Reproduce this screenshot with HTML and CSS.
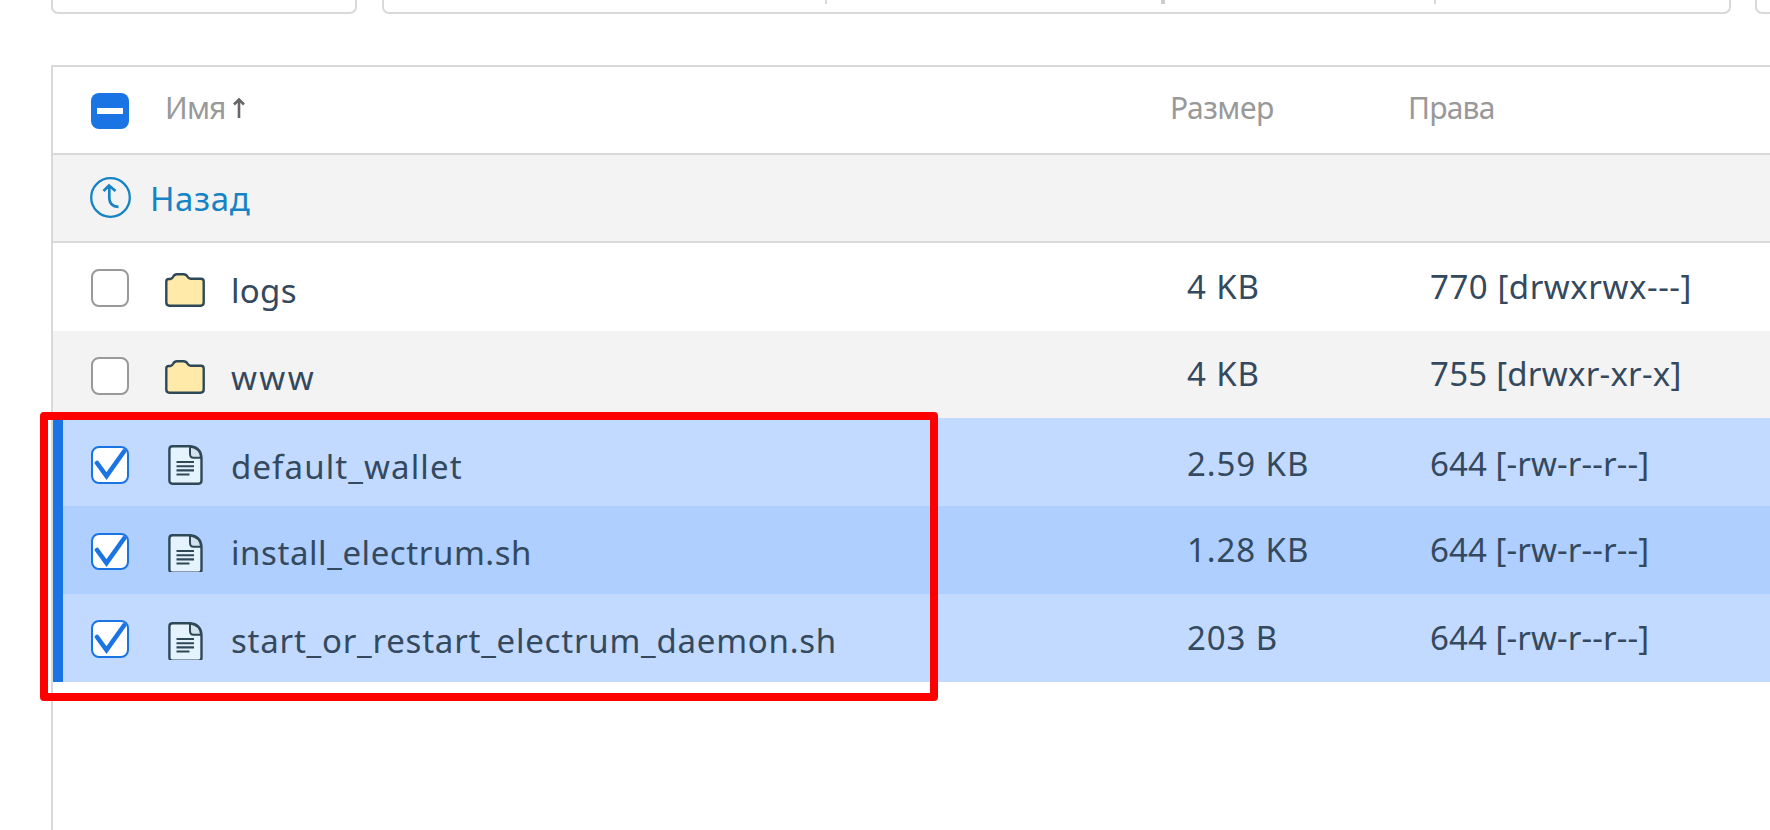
FILE: index.html
```html
<!DOCTYPE html>
<html lang="ru">
<head>
<meta charset="utf-8">
<title>Файлы</title>
<link rel="stylesheet" href="styles.css">
</head>
<body>
<svg class="defs" width="0" height="0">
  <symbol id="folder" viewBox="0 0 40 34"><path d="M1.3 8.5Q1.3 6 4 6H5.5Q7.3 5.7 8.3 3.6Q9.3 1.3 12 1.3H18.5Q21.3 1.3 22.4 3.6Q23.4 5.7 25.5 5.7H36Q38.7 5.7 38.7 8.5V29.5Q38.7 32.7 35.5 32.7H4.5Q1.3 32.7 1.3 29.5Z" fill="#ffeaa9" stroke="#2f4858" stroke-width="2.4"/></symbol>
  <symbol id="doc" viewBox="0 0 35 40"><path d="M4.5 1.3H22Q33.5 2.5 33.5 14V35.5Q33.5 38.7 30.5 38.7H4.5Q1.4 38.7 1.4 35.5V4.5Q1.4 1.3 4.5 1.3Z" fill="#e4f3fd" stroke="#2f4858" stroke-width="2.4"/><path d="M22 1.5V9Q22 12.7 25.5 12.7H33Q32.5 3 22 1.5Z" fill="#d3e3ee" stroke="#2f4858" stroke-width="2"/><path d="M8.5 17H26M8.5 21.3H26M8.5 25.4H26M8.5 29.5H21.5" stroke="#2f4858" stroke-width="2.1"/></symbol>
  <symbol id="tick" viewBox="0 0 34 34"><path d="M4 15L13.5 28L31 3.5" fill="none" stroke="#1b74e4" stroke-width="4.6" stroke-linecap="round"/></symbol>
</svg>
<div class="toolbar">
  <div class="group group-a"></div>
  <div class="group group-b"><i class="sep"></i><i class="sep thick"></i><i class="sep last"></i></div>
  <div class="group group-c"></div>
</div>
<div class="table">
  <div class="row head">
    <span class="check mixed"></span>
    <span class="title"><span class="t-name">Имя</span><svg class="arrow" viewBox="0 0 12 20"><path d="M6 20V2M1 6.5L6 1.5L11 6.5" fill="none" stroke="#666" stroke-width="2.6"/></svg></span>
    <span class="size">Размер</span>
    <span class="rights">Права</span>
  </div>
  <div class="row back">
    <svg class="up" viewBox="0 0 41 41"><circle cx="20.5" cy="20.5" r="19.3" fill="none" stroke="#1583c4" stroke-width="2.3"/><path d="M13.5 14L19 8.5L25.5 14M19.3 9V21Q19.3 29.5 28.5 29.8" fill="none" stroke="#1583c4" stroke-width="2.7"/></svg>
    <span class="link">Назад</span>
  </div>
  <div class="row logs"><span class="check"></span><svg class="folder"><use href="#folder"/></svg><span class="name">logs</span><span class="size">4 KB</span><span class="rights">770 [drwxrwx---]</span></div>
  <div class="row www"><span class="check"></span><svg class="folder"><use href="#folder"/></svg><span class="name">www</span><span class="size">4 KB</span><span class="rights">755 [drwxr-xr-x]</span></div>
  <div class="row picked wallet"><span class="check on"><svg><use href="#tick"/></svg></span><svg class="doc"><use href="#doc"/></svg><span class="name">default_wallet</span><span class="size">2.59 KB</span><span class="rights">644 [-rw-r--r--]</span></div>
  <div class="row picked install"><span class="check on"><svg><use href="#tick"/></svg></span><svg class="doc cut"><use href="#doc" width="35" height="40"/></svg><span class="name">install_electrum.sh</span><span class="size">1.28 KB</span><span class="rights">644 [-rw-r--r--]</span></div>
  <div class="row picked start"><span class="check on"><svg><use href="#tick"/></svg></span><svg class="doc cut"><use href="#doc" width="35" height="40"/></svg><span class="name">start_or_restart_electrum_daemon.sh</span><span class="size">203 B</span><span class="rights">644 [-rw-r--r--]</span></div>
</div>
<div class="marker"></div>
</body>
</html>
```
FILE: styles.css
```css
* { box-sizing: border-box; }
body { margin: 0; width: 1770px; height: 830px; overflow: hidden; position: relative; background: #fff; color: #34495e; font-family: "Noto Sans", sans-serif; font-size: 33px; }
.defs { position: absolute; }
.toolbar { display: grid; grid-template-columns: 306px 1349px 60px; gap: 24.5px; height: 14px; margin-left: 51px; width: 1800px; }
.group { border: 2px solid #d9d9d9; border-top: 0; border-radius: 0 0 7px 7px; }
.group-b { display: flex; padding-left: 441px; }
.sep { flex: none; width: 2px; height: 4px; background: #d9d9d9; margin-right: 334px; }
.sep.thick { width: 4px; background: #ccc; margin-right: 269px; }
.sep.last { margin-right: 0; }
.table { margin: 51px 0 0 51px; width: 1730px; height: 780px; border: 2px solid #d9d9d9; }
.row { display: grid; grid-template-columns: 38px 36px 40px 26px 956px 243px 1fr; align-items: center; height: 88px; padding-left: 38px; line-height: 46px; white-space: nowrap; }
.head { border-bottom: 2px solid #d9d9d9; font-size: 30px; color: #999; }
.head .title { grid-column: 3 / 6; display: flex; align-items: center; padding-bottom: 4px; }
.t-name { letter-spacing: -0.8px; }
.arrow { width: 12px; height: 20px; margin-left: 7px; }
.check { width: 38px; height: 38px; margin-top: 2px; border: 2px solid #999; border-radius: 8px; background: #fff; }
.mixed { height: 36px; background: #1b74e4; border: 0; display: flex; align-items: center; justify-content: center; }
.mixed::after { content: ""; width: 26px; height: 6px; background: #fff; }
.on { border-color: #1b74e4; display: flex; }
.on svg { width: 34px; height: 34px; }
.folder { width: 40px; height: 34px; grid-column: 3; margin-top: 5px; }
.doc { width: 35px; height: 40px; grid-column: 3; margin-left: 3px; margin-top: 6px; }
.doc.cut { height: 38px; }
.name { grid-column: 5; padding-top: 7px; }
.size { grid-column: 6; padding-bottom: 1px; letter-spacing: 0.9px; }
.rights { grid-column: 7; padding-bottom: 1px; letter-spacing: 0.1px; }
.head .size { margin-left: -17px; padding-bottom: 4px; letter-spacing: -0.45px; }
.head .rights { margin-left: -22px; padding-bottom: 4px; letter-spacing: -0.8px; }
.back { display: flex; background: #f3f3f3; border-bottom: 2px solid #d9d9d9; color: #1583c4; }
.up { width: 41px; height: 41px; margin: -2px 19px 0 -1px; }
.link { padding-top: 2px; letter-spacing: 0.6px; }
.logs .name { letter-spacing: 0.3px; }
.logs .rights { letter-spacing: 0.55px; }
.www { height: 87px; background: #f3f3f3; }
.www .name { letter-spacing: 2.4px; }
.www .rights { letter-spacing: 0.25px; }
.picked { background: #c2daff; border-left: 10px solid #1b74e4; padding-left: 28px; }
.wallet .check { margin-top: 5px; }
.wallet .name { padding-top: 9px; letter-spacing: 1.1px; }
.wallet .size, .wallet .rights { padding-top: 3px; padding-bottom: 0; }
.install { background: #aecfff; }
.install .check { height: 37px; }
.install .name { padding-top: 6px; letter-spacing: 0.57px; }
.start .name { padding-top: 6px; letter-spacing: 0.76px; }
.marker { position: absolute; left: 40px; top: 412px; width: 898px; height: 289px; border: 8px solid #f00; border-radius: 4px; }
```
